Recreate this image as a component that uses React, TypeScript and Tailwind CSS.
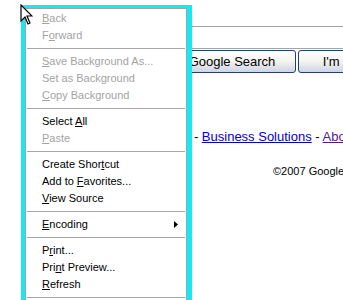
type MenuEntry =
  | { kind: "sep" }
  | { kind: "item"; pre: string; key: string; post: string; disabled?: boolean; sub?: boolean };

const MENU: MenuEntry[] = [
  { kind: "item", pre: "", key: "B", post: "ack", disabled: true },
  { kind: "item", pre: "F", key: "o", post: "rward", disabled: true },
  { kind: "sep" },
  { kind: "item", pre: "", key: "S", post: "ave Background As...", disabled: true },
  { kind: "item", pre: "Set as Back", key: "g", post: "round", disabled: true },
  { kind: "item", pre: "", key: "C", post: "opy Background", disabled: true },
  { kind: "sep" },
  { kind: "item", pre: "Select ", key: "A", post: "ll" },
  { kind: "item", pre: "", key: "P", post: "aste", disabled: true },
  { kind: "sep" },
  { kind: "item", pre: "Create Shor", key: "t", post: "cut" },
  { kind: "item", pre: "Add to ", key: "F", post: "avorites..." },
  { kind: "item", pre: "", key: "V", post: "iew Source" },
  { kind: "sep" },
  { kind: "item", pre: "", key: "E", post: "ncoding", sub: true },
  { kind: "sep" },
  { kind: "item", pre: "P", key: "r", post: "int..." },
  { kind: "item", pre: "Pri", key: "n", post: "t Preview..." },
  { kind: "item", pre: "", key: "R", post: "efresh" },
  { kind: "sep" },
];

const Cursor = () => (
  <svg width="13" height="21" viewBox="0 0 13 21" className="absolute left-[20px] top-[4px] z-20">
    <path
      d="M1 1 L1 17 L5 13 L8 20 L10 19 L7 12 L12 12 Z"
      fill="#ffffff"
      stroke="#000000"
      strokeWidth="1.2"
      strokeLinejoin="miter"
    />
  </svg>
);

const ContextMenu = () => (
  <div className="absolute left-[21px] top-[5px] z-10 w-[171px] h-[320px] border-l-[4px] border-t-[3px] border-r-[5px] border-[#12eaf4]">
    <div className="bg-white border border-[#a3a3a3] pt-px font-['Liberation_Sans',Arial,sans-serif] text-[11px] leading-[17px]">
      {MENU.map((m, idx) =>
        m.kind === "sep" ? (
          <div key={idx} className="h-[9px] flex items-center px-px">
            <div className="h-px w-full bg-[#a6a6a6]" />
          </div>
        ) : (
          <div
            key={idx}
            className={`h-[17px] pl-[16px] pr-[8px] flex items-center justify-between whitespace-nowrap ${
              m.disabled ? "text-[#a3a3a3]" : "text-black"
            }`}
          >
            <span>
              {m.pre}
              <u className="underline-offset-[1px]">{m.key}</u>
              {m.post}
            </span>
            {m.sub && (
              <svg width="4" height="7" viewBox="0 0 4 7">
                <path d="M0 0 L4 3.5 L0 7 Z" fill="#000" />
              </svg>
            )}
          </div>
        )
      )}
    </div>
  </div>
);

export default function App() {
  return (
    <div className="relative w-[343px] h-[300px] overflow-hidden bg-white font-['Liberation_Sans',Arial,sans-serif]">
      <Cursor />
      <ContextMenu />

      {/* page underneath */}
      <div className="pt-[26px]">
        <div className="ml-[120px] w-[320px] h-[23px] border border-[#a5a5a5]" />
        <div className="ml-[168px] mt-px flex gap-[2px] whitespace-nowrap">
          <button className="w-[128px] h-[23px] shrink-0 rounded-[3px] border border-[#1f3f75] bg-gradient-to-b from-white via-[#f3f3ef] to-[#cdd5e4] text-[13px] text-black">
            Google Search
          </button>
          <button className="w-[150px] h-[23px] shrink-0 rounded-[3px] border border-[#1f3f75] bg-gradient-to-b from-white via-[#f3f3ef] to-[#cdd5e4] text-[13px] text-black">
            I'm Feeling Lucky
          </button>
        </div>
        <div className="mt-[56px] pl-[66px] whitespace-nowrap text-[13px] leading-[15px] text-black">
          <a className="text-[#0000cc] underline">Advertising Programs</a> -{" "}
          <a className="text-[#0000cc] underline">Business Solutions</a> -{" "}
          <a className="text-[#551a8b] underline">About Google</a>
        </div>
        <div className="mt-[21px] pl-[273px] whitespace-nowrap text-[11px] leading-[13px] text-black">
          ©2007 Google
        </div>
      </div>
    </div>
  );
}
